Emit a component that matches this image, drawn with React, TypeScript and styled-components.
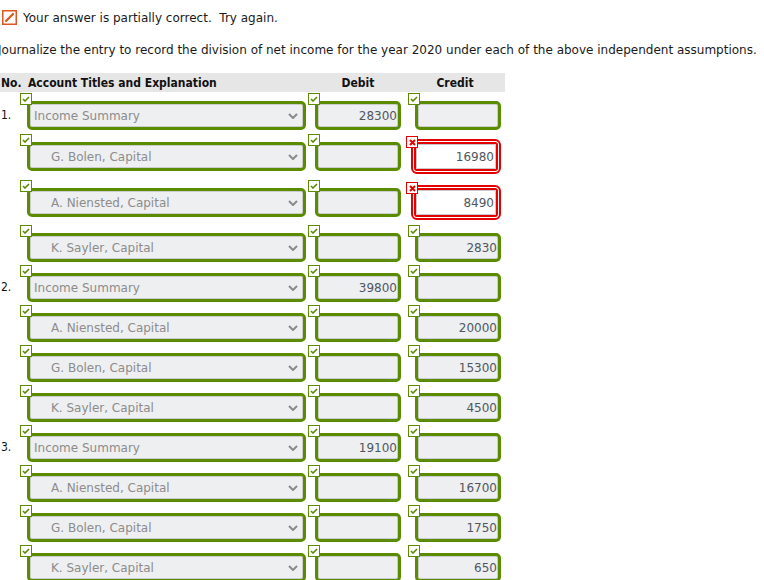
import React from "react";
import styled, { createGlobalStyle } from "styled-components";

const GlobalStyle = createGlobalStyle`
  html, body { margin: 0; padding: 0; background: #fff; }
  body { font-family: "DejaVu Sans", sans-serif; color: #111; overflow: hidden; }
`;

const GREEN = "#5b8c00";
const RED = "#e30000";

const Page = styled.div`
  width: 764px;
  height: 580px;
  overflow: hidden;
`;

const Message = styled.div`
  display: flex;
  align-items: center;
  gap: 6px;
  padding: 10px 0 0 2px;
  font-size: 12px;
  height: 15px;
  color: #1a1a1a;
`;

const Instruction = styled.p`
  margin: 17px 0 0 -2px;
  font-size: 12px;
  line-height: 16px;
  white-space: nowrap;
  color: #1a1a1a;
`;

const Table = styled.div`
  width: 505px;
  margin-top: 15px;
`;

const HeaderRow = styled.div`
  display: grid;
  grid-template-columns: 27px 288px 95px 95px;
  height: 19px;
  align-items: center;
  background: #e6e6e6;
  font-family: "DejaVu Sans Condensed", "DejaVu Sans", sans-serif;
  font-weight: bold;
  font-size: 12px;
`;

const HeaderCell = styled.div<{ $center?: boolean; $shift?: number }>`
  padding-left: ${(p) => (p.$center ? 0 : 1)}px;
  text-align: ${(p) => (p.$center ? "center" : "left")};
  width: ${(p) => (p.$center ? "86px" : "auto")};
  margin-left: ${(p) => p.$shift ?? 0}px;
  white-space: nowrap;
`;

const Row = styled.div<{ $tall?: boolean }>`
  display: grid;
  grid-template-columns: 27px 288px 100px 90px;
  align-items: start;
  height: ${(p) => (p.$tall ? 46 : 40)}px;
  padding-top: ${(p) => (p.$tall ? 10 : 9)}px;
  box-sizing: border-box;
`;

const No = styled.div`
  font-family: "DejaVu Sans Condensed", "DejaVu Sans", sans-serif;
  font-size: 12px;
  line-height: 29px;
  padding-left: 1px;
`;

const Field = styled.div<{ $w: number }>`
  position: relative;
  width: ${(p) => p.$w}px;
  height: 29px;
  box-sizing: border-box;
  border: 3px solid ${GREEN};
  border-radius: 5px;
  background: #eeeff1;
  box-shadow: inset 0 0 0 1px #cbccce;
  font-size: 12px;
  display: flex;
  align-items: center;
`;

const SelectText = styled.span<{ $indent?: boolean }>`
  flex: 1;
  padding-left: ${(p) => (p.$indent ? 21 : 4)}px;
  color: #8c8c8c;
  white-space: nowrap;
`;

const Chevron = styled.svg`
  width: 10px;
  height: 6px;
  margin-right: 5px;
  margin-top: 1px;
`;

const Amount = styled.span`
  flex: 1;
  text-align: right;
  padding-right: 1px;
  color: #505660;
`;

const ErrorFrame = styled.div`
  position: relative;
  width: 90px;
  height: 35px;
  box-sizing: border-box;
  margin: -3px 0 0 -4px;
  border: 5px double ${RED};
  border-radius: 6px;
  background: #fff;
  display: flex;
`;

const ErrorInput = styled.div`
  flex: 1;
  border: 1px solid #c9c9c9;
  border-radius: 2px;
  background: #fff;
  font-size: 12px;
  display: flex;
  align-items: center;
`;

const Badge = styled.div<{ $error?: boolean }>`
  position: absolute;
  left: -10px;
  top: ${(p) => (p.$error ? -8 : -11)}px;
  width: 12px;
  height: 12px;
  box-sizing: border-box;
  background: #fff;
  border: 1px solid ${(p) => (p.$error ? RED : GREEN)};
  display: flex;
  align-items: center;
  justify-content: center;
  z-index: 2;
`;

const Check = () => (
  <Badge>
    <svg width="8" height="6" viewBox="0 0 8 6">
      <path d="M1 3 L3 5 L7 1" fill="none" stroke={GREEN} strokeWidth="1.6" />
    </svg>
  </Badge>
);

const Cross = () => (
  <Badge $error>
    <svg width="7" height="7" viewBox="0 0 7 7">
      <path d="M1 1 L6 6 M6 1 L1 6" fill="none" stroke={RED} strokeWidth="2" />
    </svg>
  </Badge>
);

type Entry = {
  no?: string;
  account: string;
  indent?: boolean;
  debit?: string;
  credit?: string;
  creditError?: boolean;
};

const entries: Entry[] = [
  { no: "1.", account: "Income Summary", debit: "28300" },
  { account: "G. Bolen, Capital", indent: true, credit: "16980", creditError: true },
  { account: "A. Niensted, Capital", indent: true, credit: "8490", creditError: true },
  { account: "K. Sayler, Capital", indent: true, credit: "2830" },
  { no: "2.", account: "Income Summary", debit: "39800" },
  { account: "A. Niensted, Capital", indent: true, credit: "20000" },
  { account: "G. Bolen, Capital", indent: true, credit: "15300" },
  { account: "K. Sayler, Capital", indent: true, credit: "4500" },
  { no: "3.", account: "Income Summary", debit: "19100" },
  { account: "A. Niensted, Capital", indent: true, credit: "16700" },
  { account: "G. Bolen, Capital", indent: true, credit: "1750" },
  { account: "K. Sayler, Capital", indent: true, credit: "650" },
];

const MsgIcon = () => (
  <svg width="15" height="15" viewBox="0 0 15 15">
    <rect x="0.75" y="0.75" width="13.5" height="13.5" fill="#fff" stroke="#e0561f" strokeWidth="1.5" />
    <path d="M4 11 L11 4" stroke="#e0561f" strokeWidth="2.2" strokeLinecap="round" />
  </svg>
);

export default function App() {
  return (
    <Page>
      <GlobalStyle />
      <Message>
        <MsgIcon />
        <span>Your answer is partially correct.&nbsp; Try again.</span>
      </Message>
      <Instruction>
        Journalize the entry to record the division of net income for the year 2020 under each of the above independent assumptions.
      </Instruction>
      <Table>
        <HeaderRow>
          <HeaderCell>No.</HeaderCell>
          <HeaderCell>Account Titles and Explanation</HeaderCell>
          <HeaderCell $center>Debit</HeaderCell>
          <HeaderCell $center $shift={2}>Credit</HeaderCell>
        </HeaderRow>
        {entries.map((e, i) => (
          <Row key={i} $tall={!!e.creditError}>
            <No>{e.no}</No>
            <Field $w={279}>
              <Check />
              <SelectText $indent={e.indent}>{e.account}</SelectText>
              <Chevron viewBox="0 0 10 6">
                <path d="M1 1 L5 5 L9 1" fill="none" stroke="#8a8a8a" strokeWidth="2" />
              </Chevron>
            </Field>
            <Field $w={86}>
              <Check />
              <Amount>{e.debit}</Amount>
            </Field>
            {e.creditError ? (
              <ErrorFrame>
                <Cross />
                <ErrorInput>
                  <Amount>{e.credit}</Amount>
                </ErrorInput>
              </ErrorFrame>
            ) : (
              <Field $w={86}>
                <Check />
                <Amount>{e.credit}</Amount>
              </Field>
            )}
          </Row>
        ))}
      </Table>
    </Page>
  );
}
